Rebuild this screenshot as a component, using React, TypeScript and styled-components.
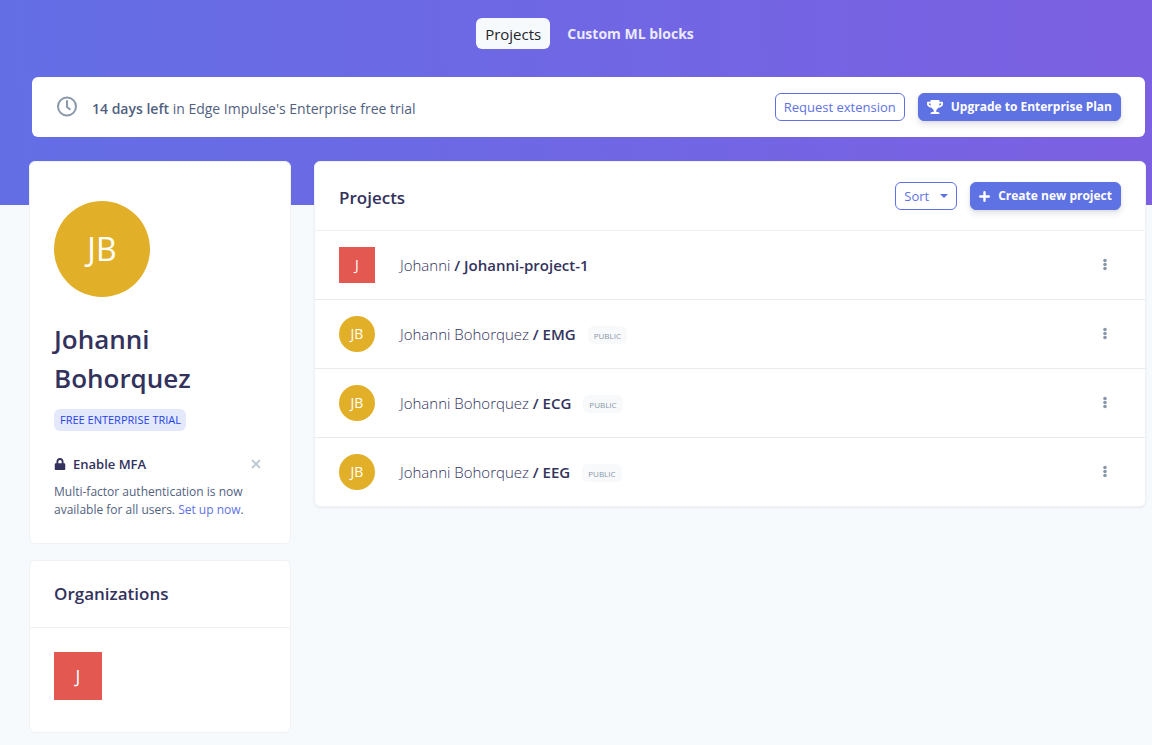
import React from "react";
import styled, { createGlobalStyle } from "styled-components";
import { FaLock, FaTrophy } from "react-icons/fa";

const GlobalStyle = createGlobalStyle`
  *, *::before, *::after { box-sizing: border-box; }
  body {
    margin: 0;
    background: #f7fafc;
    color: #525f7f;
    font-family: "Open Sans", "Noto Sans", sans-serif;
    font-size: 14px;
    line-height: 24px;
  }
  h1, h2, h3, p, ul { margin: 0; padding: 0; }
  button { font-family: inherit; cursor: pointer; }
  a { color: inherit; text-decoration: none; }
`;

const Page = styled.div`
  min-height: 100vh;
  padding: 18px 6px 12px 29px;
  background: linear-gradient(87deg, #636ee5, #7c60e2) no-repeat top / 100% 205px;
`;

const Tabs = styled.nav`
  display: flex;
  justify-content: center;
  gap: 8px;
  padding-left: 4px;
`;

const Tab = styled.a<{ $active?: boolean }>`
  padding: 4px 9px 3px;
  border-radius: 6px;
  font-size: ${(p) => (p.$active ? 15 : 14)}px;
  font-weight: ${(p) => (p.$active ? 400 : 700)};
  color: ${(p) => (p.$active ? "#212529" : "#ebeaff")};
  background: ${(p) => (p.$active ? "#f7fafc" : "transparent")};
`;

const Banner = styled.section`
  display: flex;
  align-items: center;
  gap: 13px;
  min-height: 60px;
  margin: 28px 1px 24px 3px;
  padding: 0 24px;
  border-radius: 6px;
  background: #fff;
`;

const BannerText = styled.p`
  flex: 1;
  display: flex;
  align-items: flex-end;
  gap: 14px;
  padding-top: 2px;
`;

const Strong = styled.strong`
  font-weight: 600;
`;

const Button = styled.button<{ $primary?: boolean }>`
  display: inline-flex;
  align-items: center;
  gap: 8px;
  height: 28px;
  padding: 0 8px;
  border: 1px solid #5e72e4;
  border-radius: 6px;
  font-size: ${(p) => (p.$primary ? 12 : 13)}px;
  line-height: 18px;
  font-weight: ${(p) => (p.$primary ? 700 : 500)};
  color: ${(p) => (p.$primary ? "#fff" : "#5e72e4")};
  background: ${(p) => (p.$primary ? "#5e72e4" : "#fff")};
  box-shadow: ${(p) =>
    p.$primary ? "0 4px 6px rgba(50, 50, 93, 0.11), 0 1px 3px rgba(0, 0, 0, 0.08)" : "none"};
`;

const Caret = styled.span`
  border: 4px solid transparent;
  border-top-color: currentColor;
  border-bottom: 0;
  margin-left: 3px;
`;

const Columns = styled.div`
  display: grid;
  grid-template-columns: 262px minmax(0, 1fr);
  gap: 23px;
  align-items: start;
`;

const Sidebar = styled.aside`
  display: grid;
  gap: 16px;
`;

const Card = styled.section`
  border: 1px solid #eff1f3;
  border-radius: 6px;
  background: #fff;
`;

const ProjectsCard = styled(Card)`
  box-shadow: 0 1px 2px rgba(50, 50, 93, 0.08);
`;

const Profile = styled.div`
  padding: 39px 24px 24px;
`;

const Avatar = styled.span<{ $size: number; $font: number; $square?: boolean }>`
  display: flex;
  align-items: center;
  justify-content: center;
  flex: none;
  width: ${(p) => p.$size}px;
  height: ${(p) => p.$size}px;
  border-radius: ${(p) => (p.$square ? "0" : "50%")};
  font-size: ${(p) => p.$font}px;
  color: #fff;
  background: ${(p) => (p.$square ? "#e35850" : "#e2af28")};
`;

const Name = styled.h1`
  margin-top: 23px;
  font-size: 26px;
  line-height: 39px;
  font-weight: 600;
  color: #32325d;
`;

const PlanBadge = styled.span`
  display: inline-block;
  margin-top: 11px;
  padding: 2px 5px 2px 6px;
  border-radius: 6px;
  font-size: 11px;
  line-height: 18px;
  color: #2643e9;
  background: #e4e8fb;
`;

const NoticeHead = styled.div`
  display: flex;
  align-items: center;
  gap: 7px;
  margin-top: 23px;
  padding-right: 5px;
  color: #32325d;
`;

const NoticeTitle = styled.h2`
  flex: 1;
  font-size: 13px;
  line-height: 20px;
  font-weight: 600;
`;

const IconButton = styled.button`
  display: flex;
  padding: 0;
  border: 0;
  background: none;
  color: #8898aa;
`;

const NoticeText = styled.p`
  margin-top: 9px;
  font-size: 12px;
  line-height: 18px;
`;

const Link = styled.a`
  color: #5e72e4;
`;

const CardHead = styled.header<{ $tall?: boolean }>`
  display: flex;
  align-items: flex-start;
  gap: 13px;
  padding: ${(p) => (p.$tall ? 20 : 17)}px 24px ${(p) => (p.$tall ? 16 : 17)}px;
  border-bottom: 1px solid #eff1f3;
`;

const CardTitle = styled.h2`
  flex: 1;
  font-size: 17px;
  line-height: 32px;
  font-weight: 600;
  color: #32325d;
`;

const OrgList = styled.div`
  padding: 24px 24px 32px;
`;

const ProjectList = styled.ul`
  list-style: none;
`;

const Row = styled.li`
  display: flex;
  align-items: center;
  gap: 25px;
  padding: 16px 38px 16px 24px;
  font-size: 15px;
  & + & { border-top: 1px solid #e9ecef; }
`;

const ProjectLink = styled.a`
  color: #32325d;
  font-weight: 600;
`;

const Owner = styled.span`
  font-weight: 300;
`;

const RowText = styled.div`
  flex: 1;
  display: flex;
  align-items: center;
  gap: 12px;
`;

const Tag = styled.span`
  margin-top: 2px;
  padding: 3px 6px 1px;
  border-radius: 6px;
  font-size: 8px;
  line-height: 14px;
  color: #8898aa;
  background: #f8f9fa;
`;

const projects = [
  { owner: "Johanni", name: "Johanni-project-1", initials: "J", org: true },
  { owner: "Johanni Bohorquez", name: "EMG", initials: "JB", org: false },
  { owner: "Johanni Bohorquez", name: "ECG", initials: "JB", org: false },
  { owner: "Johanni Bohorquez", name: "EEG", initials: "JB", org: false },
];

const ClockIcon = () => (
  <svg width="22" height="26" viewBox="0 0 22 26" fill="none" stroke="#8898aa" strokeWidth="2" aria-hidden="true">
    <circle cx="11" cy="11.5" r="9" />
    <path d="M11 6v6l2.8 2.2" strokeLinecap="round" strokeLinejoin="round" />
  </svg>
);

const CloseIcon = () => (
  <svg width="10" height="10" viewBox="0 0 10 10" stroke="#c3cbd4" strokeWidth="2" aria-hidden="true">
    <path d="M1 1l8 8M9 1L1 9" />
  </svg>
);

const PlusIcon = () => (
  <svg width="11" height="11" viewBox="0 0 11 11" stroke="currentColor" strokeWidth="2.4" strokeLinecap="round" aria-hidden="true">
    <path d="M5.5 1.2v8.6M1.2 5.5h8.6" />
  </svg>
);

const DotsIcon = () => (
  <svg width="4" height="14" viewBox="0 0 4 14" fill="currentColor" aria-hidden="true">
    <circle cx="2" cy="2.5" r="1.8" />
    <circle cx="2" cy="6.5" r="1.8" />
    <circle cx="2" cy="10.5" r="1.8" />
  </svg>
);

export default function App() {
  return (
    <>
      <GlobalStyle />
      <Page>
        <Tabs>
          <Tab href="#projects" $active>Projects</Tab>
          <Tab href="#blocks">Custom ML blocks</Tab>
        </Tabs>
        <Banner>
          <BannerText>
            <ClockIcon />
            <span><Strong>14 days left</Strong> in Edge Impulse's Enterprise free trial</span>
          </BannerText>
          <Button type="button">Request extension</Button>
          <Button type="button" $primary><FaTrophy size={16} />Upgrade to Enterprise Plan</Button>
        </Banner>
        <Columns>
          <Sidebar>
            <Card>
              <Profile>
                <Avatar $size={96} $font={32}>JB</Avatar>
                <Name>Johanni Bohorquez</Name>
                <PlanBadge>FREE ENTERPRISE TRIAL</PlanBadge>
                <NoticeHead>
                  <FaLock size={12} />
                  <NoticeTitle>Enable MFA</NoticeTitle>
                  <IconButton type="button" aria-label="Dismiss"><CloseIcon /></IconButton>
                </NoticeHead>
                <NoticeText>
                  Multi-factor authentication is now available for all users. <Link href="#mfa">Set up now</Link>.
                </NoticeText>
              </Profile>
            </Card>
            <Card>
              <CardHead><CardTitle>Organizations</CardTitle></CardHead>
              <OrgList>
                <a href="#org"><Avatar $size={48} $font={18} $square>J</Avatar></a>
              </OrgList>
            </Card>
          </Sidebar>
          <ProjectsCard>
            <CardHead $tall>
              <CardTitle>Projects</CardTitle>
              <Button type="button">Sort<Caret /></Button>
              <Button type="button" $primary><PlusIcon />Create new project</Button>
            </CardHead>
            <ProjectList>
              {projects.map((p) => (
                <Row key={p.name}>
                  <Avatar $size={36} $font={14} $square={p.org}>{p.initials}</Avatar>
                  <RowText>
                    <ProjectLink href="#project"><Owner>{p.owner}</Owner> / {p.name}</ProjectLink>
                    {!p.org && <Tag>PUBLIC</Tag>}
                  </RowText>
                  <IconButton type="button" aria-label={`Options for ${p.name}`}><DotsIcon /></IconButton>
                </Row>
              ))}
            </ProjectList>
          </ProjectsCard>
        </Columns>
      </Page>
    </>
  );
}
